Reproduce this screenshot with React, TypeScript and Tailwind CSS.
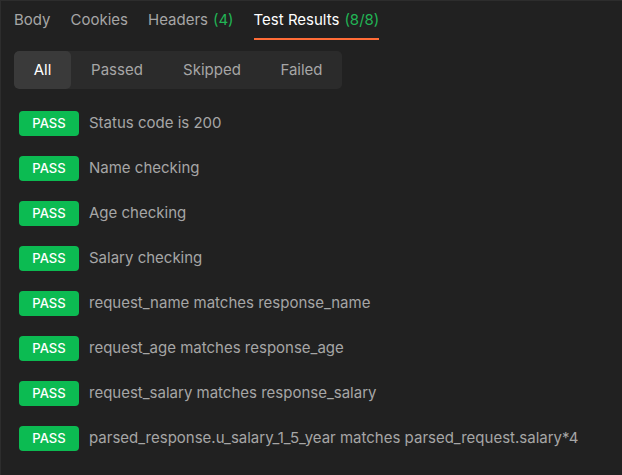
import React from "react";

const tests = [
  "Status code is 200",
  "Name checking",
  "Age checking",
  "Salary checking",
  "request_name matches response_name",
  "request_age matches response_age",
  "request_salary matches response_salary",
  "parsed_response.u_salary_1_5_year matches parsed_request.salary*4",
];

export default function App() {
  return (
    <div className="w-[622px] h-[475px] bg-[#212121] border-t border-l border-[#2d2d2d] font-['Inter',sans-serif] overflow-hidden">
      <div className="flex gap-[20px] pl-[13px] h-[40px]">
        <div className="flex items-center h-[39px] pt-[1px] border-b-2 border-transparent text-[15px] text-[#a6a6a6]">Body</div>
        <div className="flex items-center h-[39px] pt-[1px] border-b-2 border-transparent text-[15px] text-[#a6a6a6]">Cookies</div>
        <div className="flex items-center h-[39px] pt-[1px] border-b-2 border-transparent text-[15px] text-[#a6a6a6]">
          Headers<span className="ml-[5px] text-[#22b455]">(4)</span>
        </div>
        <div className="flex items-center h-[39px] pt-[1px] border-b-2 border-[#ff6c37] text-[15px] text-white">
          Test Results<span className="ml-[5px] text-[#22b455]">(8/8)</span>
        </div>
      </div>
      <div className="mt-[10px] ml-[13px] inline-flex h-[38px] rounded-[5px] bg-[#2b2b2b] text-[15px] overflow-hidden">
        <div className="w-[57px] flex items-center justify-center bg-[#3a3a3a] text-white rounded-[5px]">All</div>
        <div className="w-[92px] flex items-center justify-center text-[#a6a6a6]">Passed</div>
        <div className="w-[98px] flex items-center justify-center text-[#a6a6a6]">Skipped</div>
        <div className="w-[81px] flex items-center justify-center text-[#a6a6a6]">Failed</div>
      </div>
      <div className="mt-[22px] pl-[18px] flex flex-col gap-[20px]">
        {tests.map((t) => (
          <div key={t} className="flex items-center gap-[10px] h-[25px]">
            <div className="w-[60px] h-[25px] rounded-[4px] bg-[#0cbb52] text-white text-[13px] font-medium flex items-center justify-center">
              PASS
            </div>
            <div className="text-[15px] text-[#a6a6a6] whitespace-nowrap">{t}</div>
          </div>
        ))}
      </div>
    </div>
  );
}
